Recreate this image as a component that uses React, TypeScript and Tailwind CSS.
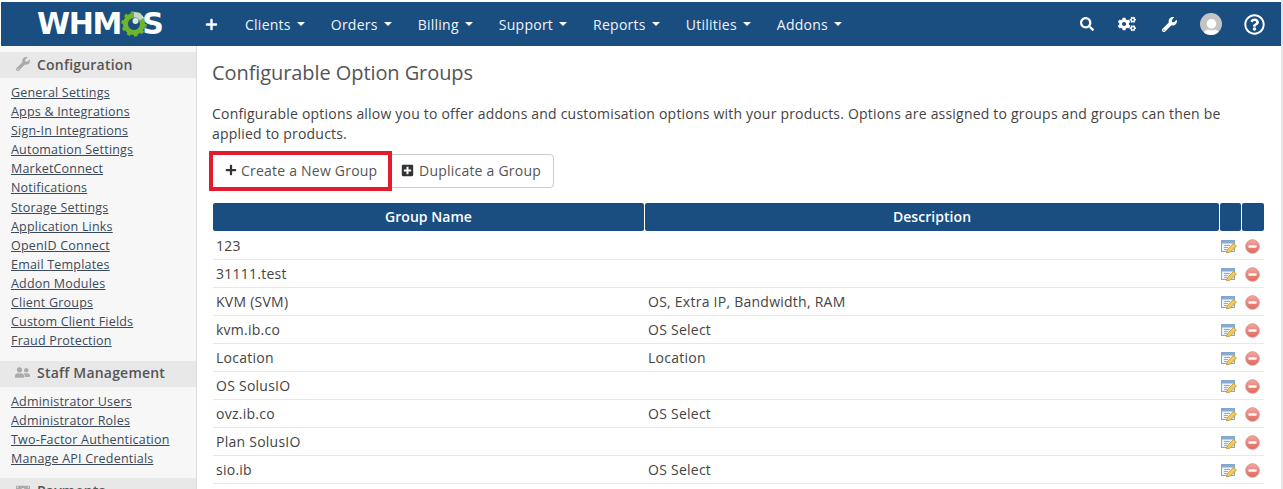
// Configurable option groups page in the WHMCS admin area.
import { FaCogs, FaPlus, FaPlusSquare, FaRegQuestionCircle, FaSearch, FaUser, FaUserFriends, FaWrench, FaMoneyBill } from 'react-icons/fa';

const NAV = ['Clients', 'Orders', 'Billing', 'Support', 'Reports', 'Utilities', 'Addons'];

const CONFIG_LINKS = [
  'General Settings',
  'Apps & Integrations',
  'Sign-In Integrations',
  'Automation Settings',
  'MarketConnect',
  'Notifications',
  'Storage Settings',
  'Application Links',
  'OpenID Connect',
  'Email Templates',
  'Addon Modules',
  'Client Groups',
  'Custom Client Fields',
  'Fraud Protection',
];

const STAFF_LINKS = [
  'Administrator Users',
  'Administrator Roles',
  'Two-Factor Authentication',
  'Manage API Credentials',
];

const GROUPS = [
  ['123', ''],
  ['31111.test', ''],
  ['KVM (SVM)', 'OS, Extra IP, Bandwidth, RAM'],
  ['kvm.ib.co', 'OS Select'],
  ['Location', 'Location'],
  ['OS SolusIO', ''],
  ['ovz.ib.co', 'OS Select'],
  ['Plan SolusIO', ''],
  ['sio.ib', 'OS Select'],
];

function Logo() {
  return (
    <div className="flex items-center w-[125px] text-white text-[30px] font-bold leading-none tracking-[-1.3px] font-['DejaVu_Sans',sans-serif]">
      <span>WHM</span>
      <svg width="26" height="26" viewBox="0 0 26 26" className="shrink-0 -mr-[5px]">
        {/* gear: green on the left, pale where the S runs over it */}
        <circle cx="13" cy="13" r="8.5" fill="none" stroke="#6cb52d" strokeWidth="5" />
        <circle cx="13" cy="13" r="11" fill="none" stroke="#6cb52d" strokeWidth="3.4" strokeDasharray="3.4 3.5" />
        <path d="M13 3.5a9.5 9.5 0 0 1 8 4.5" fill="none" stroke="#c9d6cf" strokeWidth="5" />
        <circle cx="14.5" cy="10" r="3" fill="#dfe9df" />
      </svg>
      <span>S</span>
    </div>
  );
}

function Caret() {
  return <span className="ml-[6px] inline-block border-x-[4px] border-t-[4px] border-x-transparent border-t-white align-middle" />;
}

function TopBar() {
  return (
    <header className="mt-[2px] ml-[1px] h-[44px] bg-[#1a4d80] flex items-center text-white">
      <div className="w-[204px] pl-[36px] shrink-0">
        <Logo />
      </div>
      <FaPlus className="text-[13px] mr-[27px] shrink-0" />
      <nav className="flex items-center gap-[26px] text-[14px] text-[#f0f4f8] tracking-[0.25px]">
        {NAV.map((item) => (
          <span key={item} className="flex items-center">
            {item}
            <Caret />
          </span>
        ))}
      </nav>
      <div className="ml-auto flex items-center pr-[16px]">
        <FaSearch className="text-[14px] mr-[24px]" />
        <FaCogs className="text-[18px] mr-[26px]" />
        <FaWrench className="text-[15px] mr-[23px]" />
        <div className="w-[22px] h-[22px] rounded-full bg-[#c4c4c4] overflow-hidden flex items-end justify-center mr-[22px]">
          <FaUser className="text-[19px] text-white -mb-[3px]" />
        </div>
        <FaRegQuestionCircle className="text-[21px]" />
      </div>
    </header>
  );
}

function SideSection({ icon, title, links }: { icon: React.ReactNode; title: string; links: string[] }) {
  return (
    <section className="mb-[10.3px]">
      <h3 className="h-[26px] bg-[#e8e8e8] flex items-center pl-[15px] pb-[2px] gap-[7px] text-[14px] font-semibold text-[#555] tracking-[0.2px]">
        <span className="w-[15px] text-[#aaa] text-[14px] flex justify-center">{icon}</span>
        {title}
      </h3>
      <ul className="pt-[5px] pl-[11px]">
        {links.map((link) => (
          <li key={link} className="h-[19.1px] leading-[19px] text-[12.5px] tracking-[0.2px] text-[#3a4a5a] underline">
            {link}
          </li>
        ))}
      </ul>
    </section>
  );
}

function EditIcon() {
  return (
    <svg width="16" height="15" viewBox="0 0 16 15" className="shrink-0">
      <rect x="0.5" y="1.5" width="13" height="11" fill="#eef3fa" stroke="#87a6cc" />
      <rect x="1" y="2" width="12" height="2.5" fill="#86a9d8" />
      <path d="M3 6.5h6M3 8.5h4M3 10.5h3" stroke="#a9a9a9" />
      <path d="M5.5 14l1-3.5 6-6 3 2.5-6 6z" fill="#efc95a" stroke="#b98f2c" strokeWidth="0.7" />
    </svg>
  );
}

function DeleteIcon() {
  return (
    <svg width="15" height="15" viewBox="0 0 15 15" className="shrink-0">
      <defs>
        <linearGradient id="deleteFill" x1="0" y1="0" x2="0" y2="1">
          <stop offset="0" stopColor="#f4a79d" />
          <stop offset="1" stopColor="#e0665d" />
        </linearGradient>
      </defs>
      <circle cx="7.5" cy="7.5" r="6.8" fill="url(#deleteFill)" stroke="#e0918a" />
      <rect x="3.5" y="6.3" width="8" height="2.4" fill="#fff" />
    </svg>
  );
}

function GroupsTable() {
  return (
    <div className="ml-[1px] w-[1051px] text-[14px] text-[#444] tracking-[0.25px]">
      <div className="flex gap-[1px] h-[28px] mb-[1px] text-white font-semibold tracking-[0.05px]">
        <div className="w-[431px] pb-[1px] bg-[#1a4d80] rounded-[2px] flex items-center justify-center">Group Name</div>
        <div className="w-[574px] pb-[1px] bg-[#1a4d80] rounded-[2px] flex items-center justify-center">Description</div>
        <div className="w-[21px] bg-[#1a4d80] rounded-[2px]" />
        <div className="w-[22px] bg-[#1a4d80] rounded-[2px]" />
      </div>
      {GROUPS.map(([name, description]) => (
        <div key={name} className="flex h-[28px] items-center border-b border-[#e8e8e8] pb-[1px]">
          <div className="w-[432px] pl-[3px]">{name}</div>
          <div className="flex-1 pl-[3px]">{description}</div>
          <div className="flex items-center gap-[8px] pr-[4px] pt-[3px]">
            <EditIcon />
            <DeleteIcon />
          </div>
        </div>
      ))}
    </div>
  );
}

export default function App() {
  return (
    <div className="w-[1283px] h-[489px] overflow-hidden bg-white font-['Open_Sans',sans-serif] flex">
      <div className="w-[1281px] shrink-0">
        <TopBar />
        <div className="flex">
          <aside className="w-[197px] h-[443px] shrink-0 overflow-hidden bg-[#f7f7f7] border-r border-[#ddd] pt-[6px]">
            <SideSection icon={<FaWrench />} title="Configuration" links={CONFIG_LINKS} />
            <SideSection icon={<FaUserFriends className="text-[17px]" />} title="Staff Management" links={STAFF_LINKS} />
            <SideSection icon={<FaMoneyBill />} title="Payments" links={[]} />
          </aside>
          <main className="flex-1 pl-[15px] pr-[16px]">
            <h1 className="mt-[13px] text-[20px] leading-[27px] text-[#555] tracking-[-0.08px]">Configurable Option Groups</h1>
            <p className="mt-[18px] text-[14px] leading-[20px] text-[#444] tracking-[0.2px]">
              Configurable options allow you to offer addons and customisation options with your products. Options are assigned to groups and groups can then be applied to products.
            </p>
            <div className="mt-[10px] mb-[15px] flex items-center h-[34px] text-[14px] text-[#555] tracking-[0.22px]">
              <button className="w-[183px] h-[40px] -ml-[3px] pl-[12px] pb-[2px] border-[4px] border-[#e41b2c] flex items-center gap-[4px] z-10">
                <FaPlus className="text-[12px] text-[#333]" />
                Create a New Group
              </button>
              <button className="h-[34px] -ml-[2px] pl-[10px] pr-[12px] pb-[2px] border border-[#ccc] rounded-r-[4px] flex items-center gap-[5px]">
                <FaPlusSquare className="text-[13px] text-[#333]" />
                Duplicate a Group
              </button>
            </div>
            <GroupsTable />
          </main>
        </div>
      </div>
      <div className="w-[2px] bg-[#e4e4e4]" />
    </div>
  );
}
